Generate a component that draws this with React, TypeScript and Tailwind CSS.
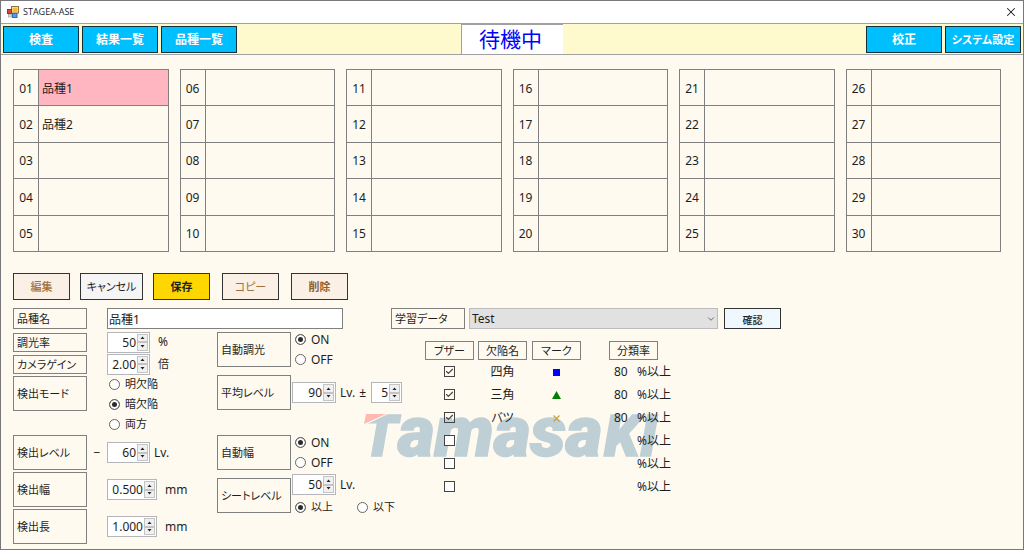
import React, { useState } from 'react';
import { Check, ChevronDown, X } from 'lucide-react';

interface DefectRow {
    name: string;
    mark: 'square' | 'triangle' | 'cross' | null;
    rate: string;
    buzzer: boolean;
}

const PRODUCTS: Record<number, string> = { 1: '品種1', 2: '品種2' };

const DEFECTS: DefectRow[] = [
    { name: '四角', mark: 'square', rate: '80', buzzer: true },
    { name: '三角', mark: 'triangle', rate: '80', buzzer: true },
    { name: 'バツ', mark: 'cross', rate: '80', buzzer: true },
    { name: '', mark: null, rate: '', buzzer: false },
    { name: '', mark: null, rate: '', buzzer: false },
    { name: '', mark: null, rate: '', buzzer: false },
];

const AppIcon = () => (
    <svg width="12" height="12" viewBox="0 0 12 12">
        <rect x="4.5" y="0.5" width="7" height="6.5" fill="#fff3c4" stroke="#8a7440" />
        <rect x="5.5" y="1.5" width="5" height="4.5" fill="#f5b92e" />
        <rect x="0.5" y="3.5" width="4" height="4" fill="#d6492f" stroke="#8c3a30" />
        <rect x="1.5" y="8.5" width="3" height="2.5" fill="#d8d8d8" stroke="#999" strokeWidth="0.6" />
        <rect x="5.5" y="7.5" width="4.5" height="4" fill="#5b9bea" stroke="#3468b0" />
    </svg>
);

const NavButton = ({ children, small }: { children: React.ReactNode; small?: boolean }) => (
    <button className={`h-[27px] w-[76px] border border-[#12303c] bg-[#00bfff] pt-0.5 font-bold whitespace-nowrap text-white ${small ? 'text-[11px]' : 'text-[12px]'}`}>
        {children}
    </button>
);

const FieldBox = ({ children, className, htmlFor }: { children: React.ReactNode; className: string; htmlFor?: string }) => (
    <label htmlFor={htmlFor} className={`flex w-[74px] shrink-0 items-center border border-[#808080] pt-0.5 pl-[3px] text-[11px] whitespace-nowrap ${className}`}>
        {children}
    </label>
);

const Spinner = ({ id, label, initial, step = 1, digits = 0, className }: { id: string; label: string; initial: number; step?: number; digits?: number; className: string }) => {
    const [value, setValue] = useState(initial.toFixed(digits));
    const bump = (d: number) => setValue(v => (Number(v) + d).toFixed(digits));

    return (
        <div className={`flex h-[21px] shrink-0 border border-[#b4b6ba] bg-white ${className}`}>
            <input
                id={id}
                aria-label={label}
                inputMode="decimal"
                value={value}
                onChange={(e) => setValue(e.target.value)}
                className="w-0 min-w-0 flex-1 bg-transparent text-right text-[12px] leading-none outline-none"
            />
            <div className="ml-px flex w-3 flex-col py-px pr-px">
                <button aria-label={`${label} +`} onClick={() => bump(step)} className="flex flex-1 items-center justify-center border border-[#c4c4c4] bg-[#f0f0f0]">
                    <svg width="5" height="3" viewBox="0 0 5 3"><path d="M0.5 3L2.5 0.4L4.5 3z" fill="#222" /></svg>
                </button>
                <button aria-label={`${label} -`} onClick={() => bump(-step)} className="flex flex-1 items-center justify-center border border-[#c4c4c4] bg-[#f0f0f0]">
                    <svg width="5" height="3" viewBox="0 0 5 3"><path d="M0.5 0L2.5 2.6L4.5 0z" fill="#222" /></svg>
                </button>
            </div>
        </div>
    );
};

const Radio = ({ name, label, latin, defaultChecked }: { name: string; label: string; latin?: boolean; defaultChecked?: boolean }) => (
    <label className={`flex h-5 shrink-0 items-center gap-[5px] whitespace-nowrap ${latin ? 'text-[12px]' : 'text-[11px]'}`}>
        <input
            type="radio"
            name={name}
            defaultChecked={defaultChecked}
            className="size-[11px] shrink-0 appearance-none rounded-full border border-[#666] bg-white checked:bg-[#2b2b2b] checked:shadow-[inset_0_0_0_2px_#fff]"
        />
        {label}
    </label>
);

const MarkIcon = ({ mark }: { mark: DefectRow['mark'] }) => {
    if (!mark) return null;
    return (
        <svg width="9" height="8" viewBox="0 0 9 8">
            {mark === 'square' && <rect x="1" y="1" width="7" height="7" fill="#0000ff" />}
            {mark === 'triangle' && <path d="M4.5 0L9 8H0z" fill="#008000" />}
            {mark === 'cross' && <path d="M1.5 1.5L7.5 7.5M7.5 1.5L1.5 7.5" stroke="#c8a040" strokeWidth="1.2" />}
        </svg>
    );
};

// Faded company logo behind the form.
const Watermark = () => (
    <svg className="pointer-events-none absolute top-[60px] left-[345px] -z-10" width="310" height="86" viewBox="-5 -22 310 86" aria-hidden="true">
        <g fill="#bfcfd6" stroke="#bfcfd6" strokeWidth="1.6" fontFamily="Roboto, Inter, sans-serif" fontWeight="900" fontStyle="italic">
            <text x="-1" y="42" fontSize="58">T</text>
            <text x="35" y="42" fontSize="71">amasa</text>
            <text x="241" y="42" fontSize="58">KI</text>
        </g>
        <path d="M-2 -1H27L-2 13z" fill="#fffaf0" />
        <path d="M3 0H23L1 10z" fill="#ffb9b0" />
    </svg>
);

const ProductTable = ({ start }: { start: number }) => (
    <table className="h-[183px] w-full table-fixed border-collapse">
        <tbody>
            {[0, 1, 2, 3, 4].map(i => {
                const no = start + i;
                return (
                    <tr key={no}>
                        <th className="w-[25px] border border-[#808080] p-0 pt-0.5 text-center text-[12px] font-normal">{String(no).padStart(2, '0')}</th>
                        <td className={`border border-[#808080] pt-0.5 pl-[3px] text-[12px] ${no === 1 ? 'bg-[#ffb6c1]' : ''}`}>{PRODUCTS[no]}</td>
                    </tr>
                );
            })}
        </tbody>
    </table>
);

const DefectTable = () => (
    <table className="mt-[9px] self-start text-[12px]">
        <thead>
            <tr className="h-[19px] align-top text-[11px]">
                {[['ブザー', 'w-[53px]'], ['欠陥名', 'w-[54px]'], ['マーク', 'w-[77px]'], ['分類率', 'w-[70px]']].map(([title, width]) => (
                    <th key={title} className={`p-0 font-normal ${width}`}>
                        <div className="flex h-[19px] w-[49px] items-center justify-center border border-[#808080] pt-0.5">{title}</div>
                    </th>
                ))}
            </tr>
        </thead>
        <tbody>
            {DEFECTS.map((d, i) => (
                <tr key={i} className="h-[23px]">
                    <td className="p-0">
                        <div className="flex w-[49px] justify-center">
                            <span className="relative flex size-[11px]">
                                <input
                                    type="checkbox"
                                    aria-label={`ブザー ${i + 1}`}
                                    defaultChecked={d.buzzer}
                                    className="peer size-[11px] appearance-none border border-[#444] bg-white checked:bg-transparent"
                                />
                                <Check size={9} strokeWidth={3} className="pointer-events-none absolute top-px left-px hidden text-[#444] peer-checked:block" />
                            </span>
                        </div>
                    </td>
                    <td className="p-0"><div className="w-[49px] text-center">{d.name}</div></td>
                    <td className="p-0"><div className="flex w-[49px] justify-center"><MarkIcon mark={d.mark} /></div></td>
                    <td className="p-0">
                        <div className="flex pl-[5px] whitespace-nowrap">
                            <span className="w-[23px]">{d.rate}</span>
                            <span>%以上</span>
                        </div>
                    </td>
                </tr>
            ))}
        </tbody>
    </table>
);

export default function App() {
    const [productName, setProductName] = useState('品種1');

    return (
        <div className="flex min-h-screen flex-col border border-[#77777c] bg-[#fffaf0] font-['Noto_Sans','Noto_Sans_CJK_JP',sans-serif] text-[#1e1e1e] [font-feature-settings:'palt']">
            <div className="flex h-[22px] items-center bg-white pr-[5px] pl-1.5">
                <AppIcon />
                <span className="ml-1 font-['Open_Sans',sans-serif] text-[9px]">STAGEA-ASE</span>
                <button aria-label="閉じる" className="ml-auto"><X size={14} strokeWidth={1.8} /></button>
            </div>

            <nav className="grid h-8 grid-cols-[1fr_102px_1fr] items-center border-y border-[#a0a0a0] bg-[#fffacd]">
                <div className="flex gap-[3px] pl-0.5">
                    <NavButton>検査</NavButton>
                    <NavButton>結果一覧</NavButton>
                    <NavButton>品種一覧</NavButton>
                </div>
                <div className="flex h-full items-center justify-center border-t border-l border-[#a0a0a0] bg-white pr-1 text-[21px] leading-none text-[#0000ff]">待機中</div>
                <div className="flex justify-end gap-[3px] pr-0.5">
                    <NavButton>校正</NavButton>
                    <NavButton small>システム設定</NavButton>
                </div>
            </nav>

            <main className="px-3 pt-3.5">
                <div className="grid grid-cols-6 gap-[11px] pr-2.5">
                    {[1, 6, 11, 16, 21, 26].map(start => <ProductTable key={start} start={start} />)}
                </div>

                <div className="mt-[21px] flex gap-2.5 text-[11px]">
                    <button className="h-[27px] w-[57px] border border-[#333] bg-[#faf0e6] pt-0.5 font-medium text-[#a0703c]">編集</button>
                    <button className="h-[27px] w-[63px] border border-[#333] bg-[#f5f5f5] pt-0.5 whitespace-nowrap">キャンセル</button>
                    <div className="flex gap-3">
                        <button className="h-[27px] w-[57px] border border-[#333] bg-[#ffd700] pt-0.5 font-bold">保存</button>
                        <button className="h-[27px] w-[57px] border border-[#333] bg-[#faf0e6] pt-0.5 text-[#a0703c]">コピー</button>
                        <button className="h-[27px] w-[57px] border border-[#333] bg-[#faf0e6] pt-0.5 font-bold text-[#955f2a]">削除</button>
                    </div>
                </div>

                <div className="mt-2 flex h-[21px]">
                    <FieldBox htmlFor="product-name" className="h-[21px]">品種名</FieldBox>
                    <input
                        id="product-name"
                        value={productName}
                        onChange={(e) => setProductName(e.target.value)}
                        className="ml-5 h-[21px] w-[236px] border border-[#808080] bg-white pl-px text-[12px] outline-none"
                    />
                    <FieldBox htmlFor="training-data" className="ml-12 h-[21px]">学習データ</FieldBox>
                    <div className="relative ml-1 w-[249px]">
                        <select id="training-data" className="block h-[21px] w-full appearance-none border border-[#bcbcbc] bg-[#e1e1e1] pl-0.5 text-[12px] leading-none outline-none">
                            <option>Test</option>
                        </select>
                        <ChevronDown size={10} className="pointer-events-none absolute top-[6px] right-[2px] text-[#555]" />
                    </div>
                    <button className="ml-1.5 h-[21px] w-[57px] border border-[#333] bg-[#f0f8ff] pt-0.5 text-[10px] leading-none font-medium">確認</button>
                </div>

                <div className="relative isolate mt-[3px] flex">
                    <Watermark />

                    <div className="flex w-[204px] flex-col gap-0.5">
                        <div className="flex h-5 items-center">
                            <FieldBox htmlFor="dimming" className="h-[19px]">調光率</FieldBox>
                            <Spinner id="dimming" label="調光率" initial={50} className="ml-5 w-[43px]" />
                            <span className="ml-2 text-[12px]">%</span>
                        </div>
                        <div className="flex h-5 items-center">
                            <FieldBox htmlFor="gain" className="h-[19px]">カメラゲイン</FieldBox>
                            <Spinner id="gain" label="カメラゲイン" initial={2} step={0.01} digits={2} className="ml-5 w-[43px]" />
                            <span className="ml-2 text-[11px]">倍</span>
                        </div>
                        <div className="flex h-[57px]">
                            <FieldBox className="h-[35px]">検出モード</FieldBox>
                            <div className="ml-[22px] flex flex-col justify-center">
                                <Radio name="mode" label="明欠陥" />
                                <Radio name="mode" label="暗欠陥" defaultChecked />
                                <Radio name="mode" label="両方" />
                            </div>
                        </div>
                        <div className="flex h-[35px] items-center">
                            <FieldBox htmlFor="level" className="h-full">検出レベル</FieldBox>
                            <span className="w-5 text-center text-[12px]">−</span>
                            <Spinner id="level" label="検出レベル" initial={60} className="w-[43px]" />
                            <span className="ml-1 text-[12px]">Lv.</span>
                        </div>
                        <div className="flex h-[35px] items-center">
                            <FieldBox htmlFor="width" className="h-full">検出幅</FieldBox>
                            <Spinner id="width" label="検出幅" initial={0.5} step={0.001} digits={3} className="ml-5 w-[50px]" />
                            <span className="ml-2 text-[12px]">mm</span>
                        </div>
                        <div className="flex h-[35px] items-center">
                            <FieldBox htmlFor="length" className="h-full">検出長</FieldBox>
                            <Spinner id="length" label="検出長" initial={1} step={0.001} digits={3} className="ml-5 w-[50px]" />
                            <span className="ml-2 text-[12px]">mm</span>
                        </div>
                    </div>

                    <div className="flex w-[208px] flex-col">
                        <div className="flex h-[35px] items-center">
                            <FieldBox className="h-full">自動調光</FieldBox>
                            <div className="ml-1">
                                <Radio name="auto-dimming" label="ON" latin defaultChecked />
                                <Radio name="auto-dimming" label="OFF" latin />
                            </div>
                        </div>
                        <div className="mt-2 flex h-[35px] items-center">
                            <FieldBox htmlFor="average" className="h-full">平均レベル</FieldBox>
                            <Spinner id="average" label="平均レベル" initial={90} className="ml-px w-[44px]" />
                            <span className="ml-1 flex w-[31px] gap-1 text-[12px]"><span>Lv.</span><span>±</span></span>
                            <Spinner id="tolerance" label="許容差" initial={5} className="w-[31px]" />
                        </div>
                        <div className="mt-[25px] flex h-[35px] items-center">
                            <FieldBox className="h-full">自動幅</FieldBox>
                            <div className="ml-1">
                                <Radio name="auto-width" label="ON" latin defaultChecked />
                                <Radio name="auto-width" label="OFF" latin />
                            </div>
                        </div>
                        <div className="mt-2 flex h-[35px] items-center">
                            <FieldBox htmlFor="sheet" className="h-full">シートレベル</FieldBox>
                            <div className="flex flex-col gap-0.5">
                                <div className="flex items-center">
                                    <Spinner id="sheet" label="シートレベル" initial={50} className="ml-px w-[44px]" />
                                    <span className="ml-1 text-[12px]">Lv.</span>
                                </div>
                                <div className="ml-1 flex gap-6">
                                    <Radio name="sheet-side" label="以上" defaultChecked />
                                    <Radio name="sheet-side" label="以下" />
                                </div>
                            </div>
                        </div>
                    </div>

                    <DefectTable />
                </div>
            </main>
        </div>
    );
}
